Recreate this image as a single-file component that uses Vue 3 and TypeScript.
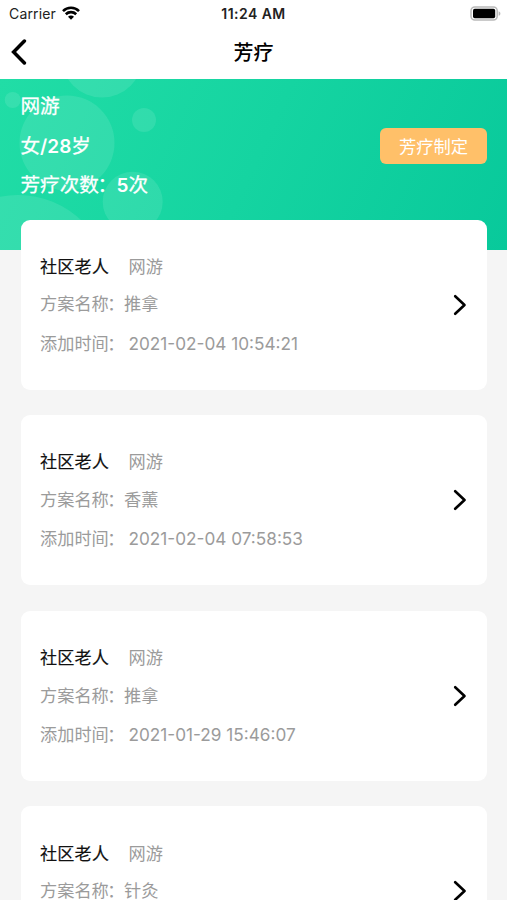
<script setup lang="ts">
interface Plan {
  id: number
  category: string
  person: string
  plan: string
  addedAt: string
}

const plans: Plan[] = [
  { id: 1, category: '社区老人', person: '网游', plan: '推拿', addedAt: '2021-02-04 10:54:21' },
  { id: 2, category: '社区老人', person: '网游', plan: '香薰', addedAt: '2021-02-04 07:58:53' },
  { id: 3, category: '社区老人', person: '网游', plan: '推拿', addedAt: '2021-01-29 15:46:07' },
  { id: 4, category: '社区老人', person: '网游', plan: '针灸', addedAt: '2021-01-29 15:45:32' },
]
</script>

<template>
  <div class="screen" lang="zh-CN">
    <div class="status-bar">
      <div class="carrier">
        <span>Carrier</span>
        <svg class="wifi" viewBox="0 0 18 14" width="18" height="14">
          <path d="M1 5.1C5.4.7 12.6.7 17 5.1" />
          <path d="M3.8 8.2C6.7 5.4 11.3 5.4 14.2 8.2" />
          <path class="dot" d="M6 10.7C7.6 9.2 10.4 9.2 12 10.7L9 13.8Z" />
        </svg>
      </div>
      <span class="time">11:24 AM</span>
      <div class="power">
        <svg viewBox="0 0 31 15" width="31" height="15">
          <rect x="1" y=".9" width="26.2" height="13.2" rx="3.8" fill="#fff" stroke="#b9b9b9" stroke-width="1.5" />
          <rect x="3" y="2.8" width="22.2" height="9.4" rx="1.7" fill="#000" />
          <path d="M28.6 5.2C31 6 31 9 28.6 9.8Z" fill="#b9b9b9" />
        </svg>
      </div>
    </div>

    <header class="nav">
      <button class="back" aria-label="返回">
        <svg viewBox="0 0 16 26" width="16" height="26"><path d="M13.4 2L2.6 13L13.4 24" /></svg>
      </button>
      <h1>芳疗</h1>
    </header>

    <section class="hero">
      <svg class="bubbles" viewBox="0 0 507 171" width="507" height="171">
        <circle cx="102" cy="-22" r="40.5" />
        <circle cx="12.7" cy="21" r="8" />
        <circle cx="67" cy="64" r="47.5" />
        <circle cx="144" cy="41" r="12" />
        <circle cx="132.7" cy="122.7" r="30" />
        <circle cx="18" cy="208" r="92" />
      </svg>
      <div class="profile">
        <p>网游</p>
        <p>女<b>/28</b>岁</p>
        <p><span class="count-label">芳疗次数<span class="colon">：</span></span><b>5</b>次</p>
      </div>
      <button class="create">芳疗制定</button>
    </section>

    <main class="list">
      <article v-for="item in plans" :key="item.id" class="card">
        <div class="details">
          <p class="row person-row"><span class="category">{{ item.category }}</span><span>{{ item.person }}</span></p>
          <p class="row plan-row"><span class="label">方案名称<span class="colon">：</span></span><span>{{ item.plan }}</span></p>
          <p class="row"><span class="label wide">添加时间<span class="colon">：</span></span><span>{{ item.addedAt }}</span></p>
        </div>
        <svg class="chevron" viewBox="0 0 14 22" width="14" height="22"><path d="M2.2 2.2L11.5 11L2.2 19.8" /></svg>
      </article>
    </main>
  </div>
</template>

<style>
body {
  margin: 0;
  background: #f5f5f5;
}
</style>

<style scoped>
.screen {
  width: 507px;
  height: 900px;
  overflow: hidden;
  background: #f5f5f5;
  font-family: Inter, "Noto Sans CJK SC", sans-serif;
}
p, h1 {
  margin: 0;
}
button {
  border: 0;
  padding: 0;
  font-family: inherit;
}
.status-bar {
  display: grid;
  grid-template-columns: 1fr auto 1fr;
  align-items: center;
  height: 27px;
  background: #fff;
  color: #222;
}
.carrier {
  display: flex;
  align-items: center;
  gap: 6px;
  padding-left: 9px;
  font-size: 14px;
  letter-spacing: 0.15px;
}
.wifi {
  margin-bottom: 2px;
}
.wifi path {
  fill: none;
  stroke: #000;
  stroke-width: 2.6;
}
.wifi .dot {
  fill: #000;
  stroke: none;
}
.time {
  font-size: 14px;
  font-weight: 600;
  letter-spacing: 0.45px;
}
.power {
  display: flex;
  justify-content: flex-end;
  padding-right: 6px;
}
.nav {
  display: grid;
  grid-template-columns: 1fr auto 1fr;
  align-items: center;
  height: 52px;
  background: #fff;
}
.back {
  display: flex;
  width: 36px;
  padding: 0 0 2px 10.5px;
  background: none;
}
.back path {
  fill: none;
  stroke: #000;
  stroke-width: 3.5;
  stroke-linecap: round;
}
h1 {
  font-size: 20px;
  line-height: 50px;
  font-weight: 500;
  color: #000;
}
.hero {
  position: relative;
  display: flex;
  justify-content: space-between;
  align-items: flex-start;
  box-sizing: border-box;
  height: 171px;
  padding: 8px 20px 0 20.5px;
  overflow: hidden;
  background: linear-gradient(115deg, #21dda6 0%, #15d4a1 50%, #08c99b 100%);
}
.bubbles {
  position: absolute;
  inset: 0;
  fill: #fff;
  fill-opacity: 0.1;
}
.profile {
  position: relative;
  color: #fff;
  font-size: 19.6px;
  font-weight: 400;
  -webkit-text-stroke: 0.3px currentColor;
}
.profile b {
  font-weight: 600;
  font-size: 19px;
  -webkit-text-stroke: 0;
}
.profile p {
  height: 39.5px;
  line-height: 39.5px;
  white-space: nowrap;
}
.count-label {
  display: inline-block;
  width: 96px;
}
.colon {
  margin-left: -1.5px;
}
.create {
  position: relative;
  width: 107px;
  height: 36px;
  margin-top: 41px;
  border-radius: 6px;
  background: #ffc069;
  color: #fff;
  font-size: 17.3px;
  line-height: 37px;
}
.list {
  position: relative;
  display: flex;
  flex-direction: column;
  gap: 25.2px;
  margin-top: -30.5px;
  padding: 0 20px 0 21px;
}
.card {
  display: flex;
  justify-content: space-between;
  align-items: center;
  flex-shrink: 0;
  box-sizing: border-box;
  height: 170.4px;
  padding: 0 20px 0 19px;
  border-radius: 9px;
  background: #fff;
}
.details {
  padding-top: 1.6px;
  color: #9b9b9b;
  font-size: 17.2px;
}
.row {
  display: flex;
  height: 38.5px;
  line-height: 38.5px;
  white-space: nowrap;
}
.person-row {
  height: 37.6px;
}
.plan-row {
  height: 39.2px;
}
.category {
  width: 88.5px;
  color: #111;
  letter-spacing: 0.1px;
  -webkit-text-stroke: 0.15px currentColor;
}
.label {
  width: 84px;
}
.wide {
  width: 88.5px;
}
.chevron path {
  fill: none;
  stroke: #000;
  stroke-width: 2.6;
  stroke-linecap: round;
  stroke-linejoin: round;
}
</style>
